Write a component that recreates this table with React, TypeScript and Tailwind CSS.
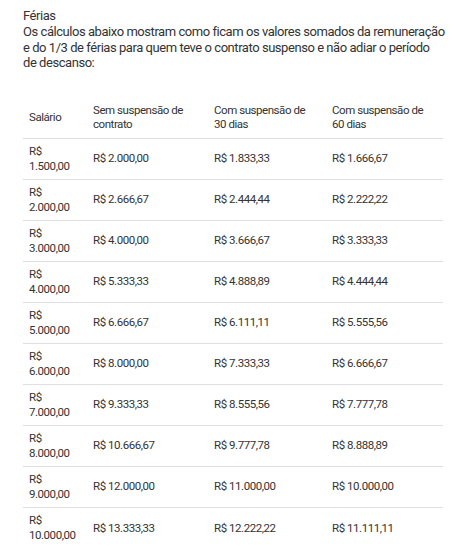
const rows = [
  ["1.500,00", "R$ 2.000,00", "R$ 1.833,33", "R$ 1.666,67"],
  ["2.000,00", "R$ 2.666,67", "R$ 2.444,44", "R$ 2.222,22"],
  ["3.000,00", "R$ 4.000,00", "R$ 3.666,67", "R$ 3.333,33"],
  ["4.000,00", "R$ 5.333,33", "R$ 4.888,89", "R$ 4.444,44"],
  ["5.000,00", "R$ 6.666,67", "R$ 6.111,11", "R$ 5.555,56"],
  ["6.000,00", "R$ 8.000,00", "R$ 7.333,33", "R$ 6.666,67"],
  ["7.000,00", "R$ 9.333,33", "R$ 8.555,56", "R$ 7.777,78"],
  ["8.000,00", "R$ 10.666,67", "R$ 9.777,78", "R$ 8.888,89"],
  ["9.000,00", "R$ 12.000,00", "R$ 11.000,00", "R$ 10.000,00"],
  ["10.000,00", "R$ 13.333,33", "R$ 12.222,22", "R$ 11.111,11"],
];

export default function App() {
  return (
    <div className="w-[458px] h-[546px] bg-white overflow-hidden flex flex-col text-[#333] font-['Roboto',sans-serif]">
      <div className="flex-1 pl-[23px] pr-[15px] pt-[8px]">
        <div className="text-[13px] leading-[16px] tracking-[-0.45px]">Férias</div>
        <p className="text-[13px] leading-[15.5px] tracking-[-0.45px] w-[422px]">
          Os cálculos abaixo mostram como ficam os valores somados da remuneração e do 1/3 de férias para quem teve o contrato suspenso e não adiar o período de descanso:
        </p>
        <table className="mt-[26px] w-[420px] border-collapse table-fixed text-[11.5px] leading-[14.5px] tracking-[-0.45px]">
          <colgroup>
            <col className="w-[64px]" />
            <col className="w-[121px]" />
            <col className="w-[118px]" />
            <col className="w-[117px]" />
          </colgroup>
          <thead>
            <tr className="border-b border-[#e0e0e0]">
              <th className="font-normal text-left align-middle px-[6px] py-[6px]">Salário</th>
              <th className="font-normal text-left align-middle px-[6px] py-[6px]">
                <span className="block">Sem suspensão de</span>
                <span className="block">contrato</span>
              </th>
              <th className="font-normal text-left align-middle px-[6px] py-[6px]">
                <span className="block">Com suspensão de</span>
                <span className="block">30 dias</span>
              </th>
              <th className="font-normal text-left align-middle px-[6px] py-[6px]">
                <span className="block">Com suspensão de</span>
                <span className="block">60 dias</span>
              </th>
            </tr>
          </thead>
          <tbody>
            {rows.map((r, i) => (
              <tr key={i} className={i < rows.length - 1 ? "border-b border-[#e0e0e0]" : ""}>
                <td className="align-middle px-[6px] h-[41px]">
                  <span className="block">R$</span>
                  <span className="block">{r[0]}</span>
                </td>
                <td className="align-middle px-[6px] h-[41px]">{r[1]}</td>
                <td className="align-middle px-[6px] h-[41px]">{r[2]}</td>
                <td className="align-middle px-[6px] h-[41px]">{r[3]}</td>
              </tr>
            ))}
          </tbody>
        </table>
      </div>
      <div className="h-[3px] bg-[#e6e6e6] shrink-0" />
    </div>
  );
}
